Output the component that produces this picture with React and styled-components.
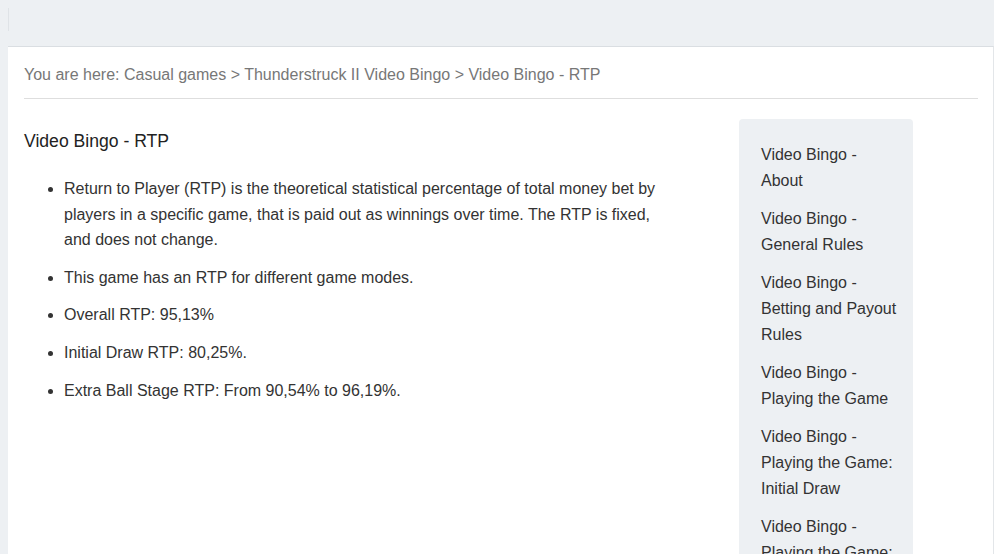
import styled, { createGlobalStyle } from "styled-components";

const GlobalStyle = createGlobalStyle`
  html, body {
    margin: 0;
    padding: 0;
    background: #edf0f3;
    font-family: "Liberation Sans", Arial, sans-serif;
    color: #333;
  }
`;

const sections = [
  "Video Bingo - About",
  "Video Bingo - General Rules",
  "Video Bingo - Betting and Payout Rules",
  "Video Bingo - Playing the Game",
  "Video Bingo - Playing the Game: Initial Draw",
  "Video Bingo - Playing the Game: Extra Ball Stage",
  "Video Bingo - RTP",
];

const facts = [
  "Return to Player (RTP) is the theoretical statistical percentage of total money bet by players in a specific game, that is paid out as winnings over time. The RTP is fixed, and does not change.",
  "This game has an RTP for different game modes.",
  "Overall RTP: 95,13%",
  "Initial Draw RTP: 80,25%.",
  "Extra Ball Stage RTP: From 90,54% to 96,19%.",
];

const App = () => {
  return (
    <>
      <GlobalStyle />
      <Page>
        <TopBar>
          <Divider />
        </TopBar>
        <Panel>
          <Breadcrumb>
            You are here: Casual games &gt; Thunderstruck II Video Bingo &gt;
            Video Bingo - RTP
          </Breadcrumb>
          <Layout>
            <Article>
              <h2>Video Bingo - RTP</h2>
              <ul>
                {facts.map((f) => (
                  <li key={f}>{f}</li>
                ))}
              </ul>
            </Article>
            <Sidebar>
              {sections.map((s) => (
                <SideLink key={s}>{s}</SideLink>
              ))}
            </Sidebar>
          </Layout>
        </Panel>
      </Page>
    </>
  );
};

const Page = styled.div`
  height: 554px;
  overflow: hidden;
  padding: 8px 0 0 8px;
  box-sizing: border-box;
`;

const TopBar = styled.div`
  height: 38px;
`;

const Divider = styled.div`
  width: 1px;
  height: 23px;
  background: #dfe3e7;
`;

const Panel = styled.div`
  background: #fff;
  border-top: 1px solid #dadee2;
  border-right: 1px solid #e3e6e9;
  padding: 0 15px 0 16px;
  min-height: 600px;
`;

const Breadcrumb = styled.div`
  font-size: 16px;
  line-height: 20px;
  color: #777;
  padding: 18px 0 13px;
  border-bottom: 1px solid #dedede;
`;

const Layout = styled.div`
  display: grid;
  grid-template-columns: 640px 174px;
  column-gap: 75px;
  padding-top: 20px;
`;

const Article = styled.section`
  h2 {
    margin: 12px 0 0;
    font-size: 17.6px;
    font-weight: 400;
    line-height: 20px;
    color: #222;
  }
  ul {
    margin: 25px 0 0;
    padding-left: 40px;
    font-size: 16px;
    line-height: 1.6;
    color: #333;
  }
  li {
    margin-bottom: 12px;
  }
`;

const Sidebar = styled.nav`
  background: #edf0f3;
  border-radius: 4px;
  padding: 23px 14px 21px 22px;
  display: flex;
  flex-direction: column;
  gap: 13px;
  align-self: start;
`;

const SideLink = styled.a`
  font-size: 16px;
  line-height: 1.6;
  color: #333;
  text-decoration: none;
`;

export default App;
